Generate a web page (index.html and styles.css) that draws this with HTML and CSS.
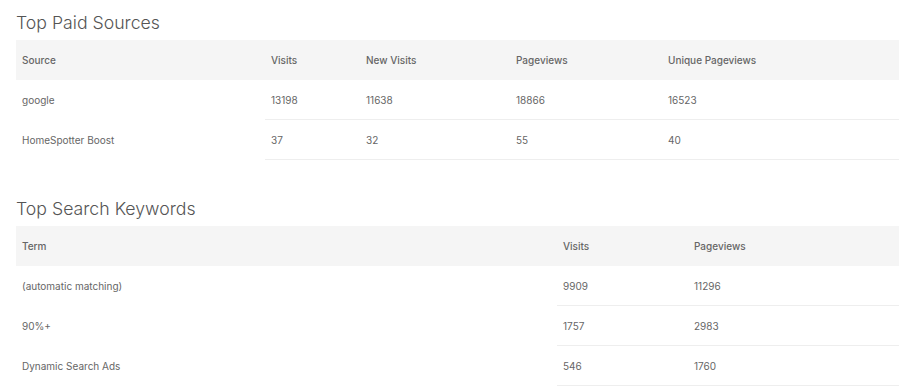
FILE: index.html
```html
<!DOCTYPE html>
<html>
<head>
<meta charset="utf-8">
<link rel="stylesheet" href="styles.css">
</head>
<body>
<div class="page">
  <section class="report report-paid">
    <h2 class="report-title">Top Paid Sources</h2>
    <table class="data-table">
      <colgroup>
        <col class="c-source"><col class="c-visits"><col class="c-new"><col class="c-pv"><col>
      </colgroup>
      <thead>
        <tr><th>Source</th><th>Visits</th><th>New Visits</th><th>Pageviews</th><th>Unique Pageviews</th></tr>
      </thead>
      <tbody>
        <tr><td>google</td><td>13198</td><td>11638</td><td>18866</td><td>16523</td></tr>
        <tr><td>HomeSpotter Boost</td><td>37</td><td>32</td><td>55</td><td>40</td></tr>
      </tbody>
    </table>
  </section>
  <section class="report report-keywords">
    <h2 class="report-title">Top Search Keywords</h2>
    <table class="data-table">
      <colgroup>
        <col class="c-term"><col class="c-kvisits"><col>
      </colgroup>
      <thead>
        <tr><th>Term</th><th>Visits</th><th>Pageviews</th></tr>
      </thead>
      <tbody>
        <tr><td>(automatic matching)</td><td>9909</td><td>11296</td></tr>
        <tr><td>90%+</td><td>1757</td><td>2983</td></tr>
        <tr><td>Dynamic Search Ads</td><td>546</td><td>1760</td></tr>
      </tbody>
    </table>
  </section>
</div>
</body>
</html>
```

FILE: styles.css
```css
html, body {
  margin: 0;
  padding: 0;
  background: #fff;
}
body {
  font-family: Inter, "Noto Sans", "Liberation Sans", sans-serif;
  color: #666;
}
.page {
  padding-left: 16px;
}
.report-keywords {
  margin-top: 26px;
}
.report-title {
  margin: 0;
  height: 40px;
  box-sizing: border-box;
  padding-top: 12px;
  font-size: 17.7px;
  line-height: 22px;
  font-weight: 300;
  color: #555;
}
.data-table {
  width: 100%;
  border-collapse: collapse;
  table-layout: fixed;
  font-size: 10px;
}
.c-source { width: 249px; }
.c-visits { width: 95px; }
.c-new { width: 150px; }
.c-pv { width: 152px; }
.c-term { width: 541px; }
.c-kvisits { width: 131px; }
.data-table th {
  background: #f5f5f5;
  height: 40px;
  padding: 0 6px;
  text-align: left;
  font-weight: 500;
  color: #666;
}
.data-table td {
  height: 39px;
  padding: 0 6px;
  border-bottom: 1px solid #eee;
  color: #666;
}
.data-table td:first-child {
  border-bottom-color: transparent;
}
```
